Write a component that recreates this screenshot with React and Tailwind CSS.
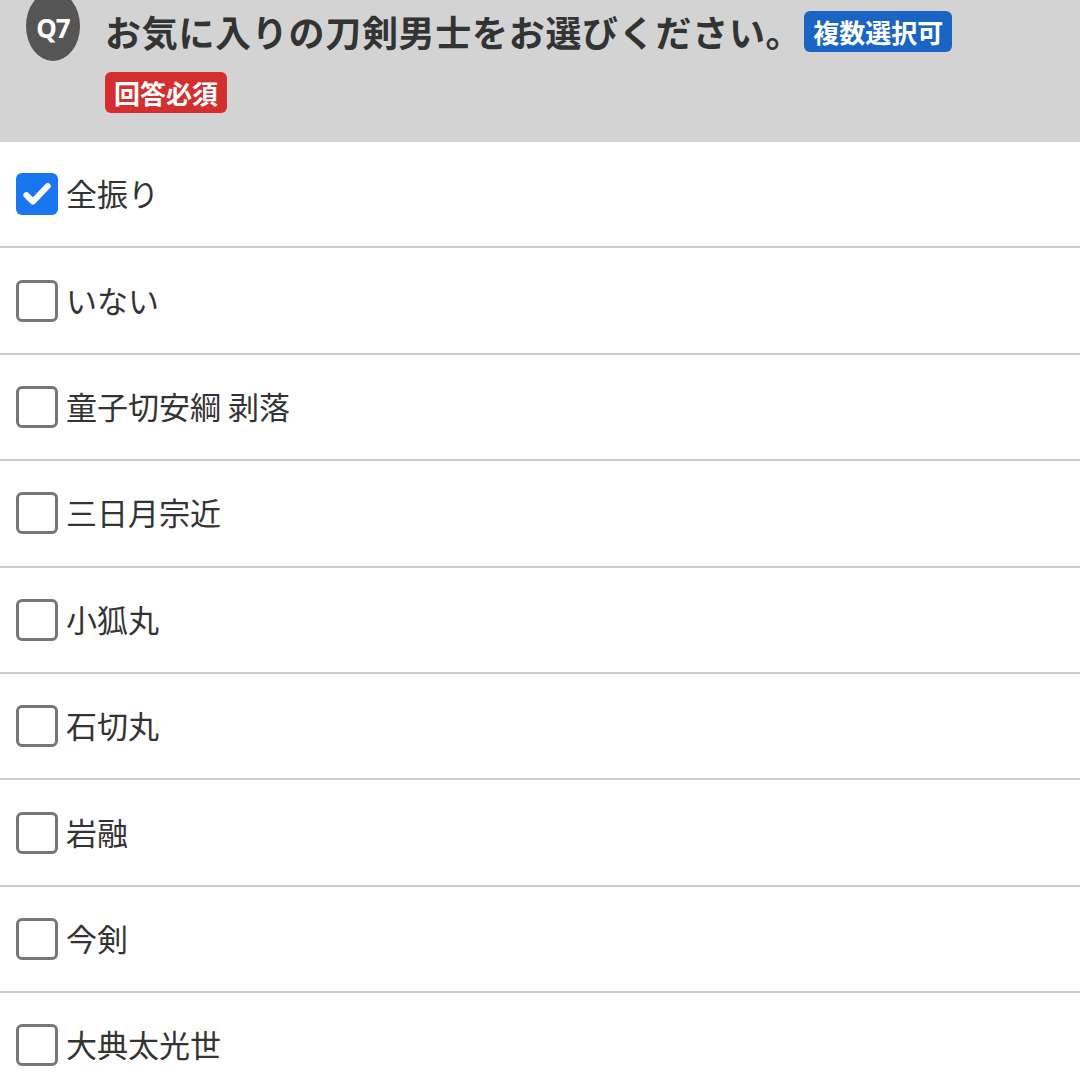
const options = [
  { label: "全振り", checked: true },
  { label: "いない", checked: false },
  { label: "童子切安綱 剥落", checked: false },
  { label: "三日月宗近", checked: false },
  { label: "小狐丸", checked: false },
  { label: "石切丸", checked: false },
  { label: "岩融", checked: false },
  { label: "今剣", checked: false },
  { label: "大典太光世", checked: false },
];

const jp = { fontFamily: '"Noto Sans CJK JP", "Noto Sans", sans-serif' };

function CheckBox({ checked }) {
  if (checked) {
    return (
      <span className="flex h-[42px] w-[42px] shrink-0 items-center justify-center rounded-[6px] bg-[#1a76f0]">
        <svg width="34" height="34" viewBox="0 0 24 24" fill="none">
          <path d="M4.5 12.8l4.6 4.6L19.6 6.4" stroke="#fff" strokeWidth="4.2" strokeLinecap="round" strokeLinejoin="round" />
        </svg>
      </span>
    );
  }
  return <span className="h-[42px] w-[42px] shrink-0 rounded-[6px] border-[3px] border-[#767676] bg-white" />;
}

export default function App() {
  return (
    <div className="min-h-[1080px] w-[1080px] overflow-hidden bg-white text-[#333]" style={jp}>
      {/* question header */}
      <div className="flex h-[142px] bg-[#d3d3d3] pl-[26px] pr-[60px]">
        <div className="-mt-[9px] flex h-[70px] w-[54px] shrink-0 items-center justify-center rounded-[50%] bg-[#555]">
          <span className="mt-[4px] text-[26px] font-bold leading-none tracking-[-1px] text-white" style={{ fontFamily: '"Noto Sans", sans-serif' }}>
            Q7
          </span>
        </div>
        <div className="ml-[25px] flex flex-1 flex-wrap content-start items-center gap-x-[10px] gap-y-[20px] pt-[11px]">
          <span className="-mr-[8px] text-[36px] font-bold leading-[41px] tracking-[0.7px] text-[#333]">お気に入りの刀剣男士をお選びください。</span>
          <span className="h-[41px] rounded-[6px] bg-[#1a64c4] px-[9px] text-[26px] font-bold leading-[41px] text-white">複数選択可</span>
          <span className="h-[41px] rounded-[6px] bg-[#d32f2f] px-[9px] text-[26px] font-bold leading-[41px] text-white">回答必須</span>
        </div>
      </div>

      {/* options */}
      {options.map((option, index) => (
        <label
          key={index}
          className="flex h-[106.4px] items-center gap-[8px] border-b-2 border-[#cccccc] pl-[16px]"
        >
          <CheckBox checked={option.checked} />
          <span className="mb-[3px] text-[31px] leading-none text-[#333]">{option.label}</span>
        </label>
      ))}
    </div>
  );
}
